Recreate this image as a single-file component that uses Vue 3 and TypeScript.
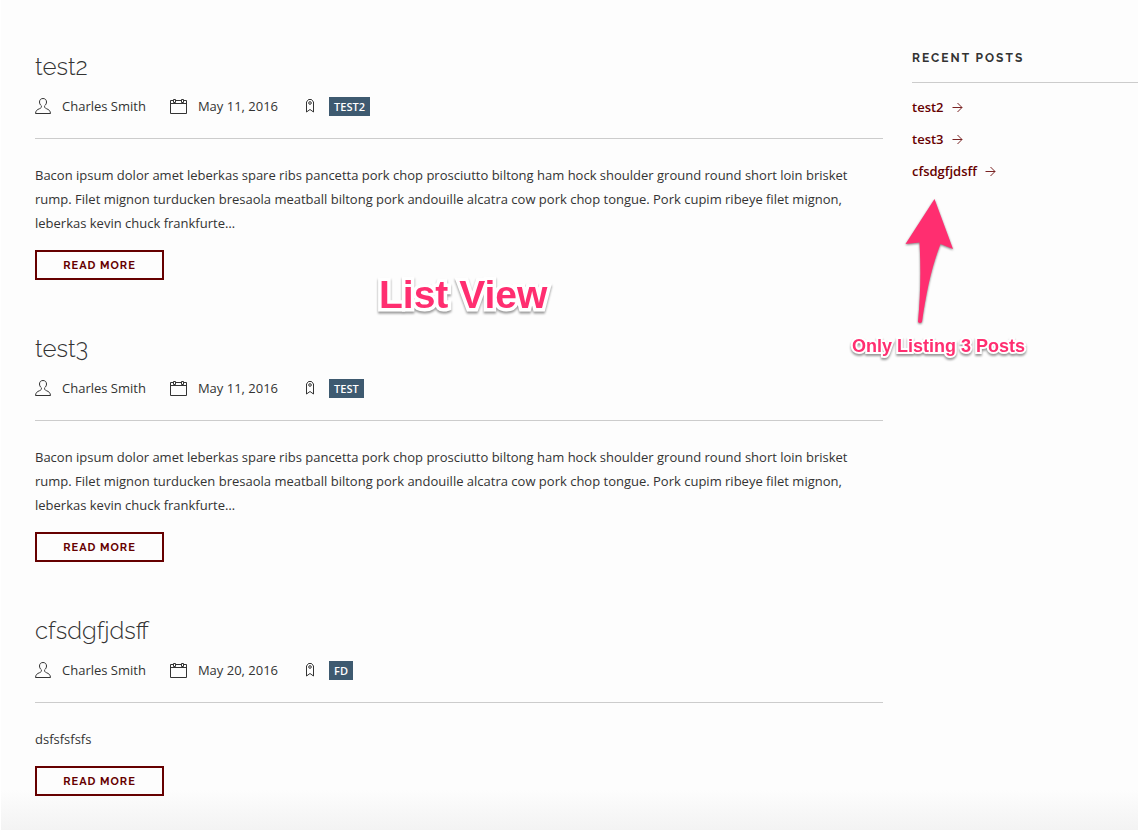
<script setup lang="ts">
interface Post {
  title: string
  author: string
  date: string
  tag: string
  excerpt: string
}

const bacon =
  'Bacon ipsum dolor amet leberkas spare ribs pancetta pork chop prosciutto biltong ham hock shoulder ground round short loin brisket rump. Filet mignon turducken bresaola meatball biltong pork andouille alcatra cow pork chop tongue. Pork cupim ribeye filet mignon, leberkas kevin chuck frankfurte…'

const posts: Post[] = [
  { title: 'test2', author: 'Charles Smith', date: 'May 11, 2016', tag: 'TEST2', excerpt: bacon },
  { title: 'test3', author: 'Charles Smith', date: 'May 11, 2016', tag: 'TEST', excerpt: bacon },
  { title: 'cfsdgfjdsff', author: 'Charles Smith', date: 'May 20, 2016', tag: 'FD', excerpt: 'dsfsfsfsfs' },
]
</script>

<template>
  <div class="page">
    <main class="posts">
      <article v-for="post in posts" :key="post.title" class="post">
        <h2 class="title">{{ post.title }}</h2>
        <div class="meta">
          <span class="meta-item author">
            <svg class="icon" width="16" height="16" viewBox="0 0 16 16" aria-hidden="true">
              <path d="M8 .5C5.700 .5 4.500 2 4.500 4C4.500 5.600 5.200 6.800 6.300 7.700C6.700 9.300 6.200 10 4.500 10.700C2 11.700 .8 12.600 .5 15.500H15.500C15.200 12.600 14 11.700 11.500 10.700C9.800 10 9.300 9.300 9.700 7.700C10.800 6.800 11.500 5.600 11.500 4C11.500 2 10.300 .5 8 .5Z" />
            </svg>
            {{ post.author }}
          </span>
          <span class="meta-item date">
            <svg class="icon" width="17" height="16" viewBox="0 0 17 16" aria-hidden="true">
              <path d="M3 2.500H.5V15.500H16.500V2.500H14M6 2.500H11M.5 5.500H16.500M3.500 1.500H5.500V4.500H3.500ZM11.500 1.500H13.500V4.500H11.500Z" />
            </svg>
            {{ post.date }}
          </span>
          <span class="meta-item tags">
            <svg class="icon" width="10" height="16" viewBox="0 0 10 16" aria-hidden="true">
              <path d="M1.500 14V4L3.500 1.500H6.500L8.500 4V14L5 11.500ZM5 3.700A1.300 1.300 0 1 0 5 6.300A1.300 1.300 0 1 0 5 3.700Z" />
            </svg>
            <a class="tag" href="#">{{ post.tag }}</a>
          </span>
        </div>
        <p class="excerpt">{{ post.excerpt }}</p>
        <a class="more" href="#">READ MORE</a>
      </article>
    </main>

    <aside class="sidebar">
      <h3 class="side-title">RECENT POSTS</h3>
      <ul class="recent">
        <li v-for="post in posts" :key="post.title">
          <a href="#">
            {{ post.title }}
            <svg class="arrow" width="11" height="11" viewBox="0 0 11 11" aria-hidden="true">
              <path d="M.5 5.500H10M5.500 1L10 5.500L5.500 10" />
            </svg>
          </a>
        </li>
      </ul>
      <svg class="pointer" width="60" height="136" viewBox="0 0 60 136" aria-hidden="true">
        <path d="M34.500 4L53 54L40.500 49C31 73 26 100 22 127Q20 129 18 127C20.500 100 21 75 19.500 47.500L5.500 49Z" />
      </svg>
      <div class="note note-small">Only Listing 3 Posts</div>
    </aside>

    <div class="note note-large">List View</div>
  </div>
</template>

<style>
body {
  background: #fff;
}
</style>

<style scoped>
.page {
  position: relative;
  box-sizing: border-box;
  min-height: 830px;
  margin: 0 1px;
  padding: 48px 0 34px 34px;
  display: grid;
  grid-template-columns: minmax(0, 1fr) 226px;
  column-gap: 29px;
  background: linear-gradient(to top, #f3f3f3, #fdfdfd 40px);
  color: #333;
  font-family: "Open Sans", "Noto Sans", sans-serif;
  font-size: 13px;
  line-height: 24px;
}

.post + .post {
  margin-top: 50px;
}

.title {
  margin: 0;
  font-family: Raleway, Lato, sans-serif;
  font-size: 24px;
  font-weight: 300;
  line-height: 38px;
}

.meta {
  display: flex;
  align-items: center;
  height: 40px;
  padding-bottom: 12px;
  border-bottom: 1px solid #ccc;
}

.meta-item {
  display: flex;
  align-items: center;
}

.author {
  gap: 11px;
}

.date {
  gap: 11px;
  margin-left: 24px;
}

.tags {
  gap: 14px;
  margin-left: 27px;
}

.icon {
  flex: none;
  fill: none;
  stroke: #333;
  stroke-width: 1;
}

.tag {
  padding: 0 5px;
  background: #3e5a70;
  color: #fff;
  font-size: 11px;
  font-weight: 600;
  line-height: 19px;
  text-decoration: none;
}

.excerpt {
  margin: 24px 0 15px;
}

.more {
  display: block;
  box-sizing: border-box;
  width: 129px;
  padding-top: 2px;
  border: 2px solid #660000;
  color: #660000;
  font-family: Raleway, Lato, sans-serif;
  font-size: 11px;
  font-weight: 700;
  letter-spacing: 1px;
  line-height: 24px;
  text-align: center;
  text-decoration: none;
}

.sidebar {
  position: relative;
}

.side-title {
  margin: 0;
  padding-bottom: 14px;
  border-bottom: 1px solid #ccc;
  font-family: Raleway, Lato, sans-serif;
  font-size: 12px;
  font-weight: 700;
  letter-spacing: 2px;
  line-height: 20px;
}

.recent {
  margin: 12px 0 0;
  padding: 0;
  list-style: none;
}

.recent li {
  margin-bottom: 8px;
}

.recent a {
  display: flex;
  align-items: center;
  gap: 8px;
  color: #660000;
  font-weight: 600;
  text-decoration: none;
}

.arrow {
  fill: none;
  stroke: #7a2424;
  stroke-width: 1;
}

.pointer {
  position: absolute;
  top: 147px;
  left: -12px;
  fill: #ff2e70;
  filter: drop-shadow(0 1px 1px rgba(0, 0, 0, 0.5));
}

.note {
  position: absolute;
  color: #ff2e70;
  font-family: "Liberation Sans", Arial, sans-serif;
  font-weight: 700;
  white-space: nowrap;
  -webkit-text-stroke-color: #fff;
  paint-order: stroke fill;
  filter: drop-shadow(0 2px 1px rgba(0, 0, 0, 0.4));
}

.note-large {
  top: 273px;
  left: 378px;
  font-size: 39px;
  line-height: 44px;
  -webkit-text-stroke-width: 7px;
}

.note-small {
  top: 287px;
  left: -60px;
  font-size: 18px;
  line-height: 22px;
  -webkit-text-stroke-width: 4px;
}
</style>
